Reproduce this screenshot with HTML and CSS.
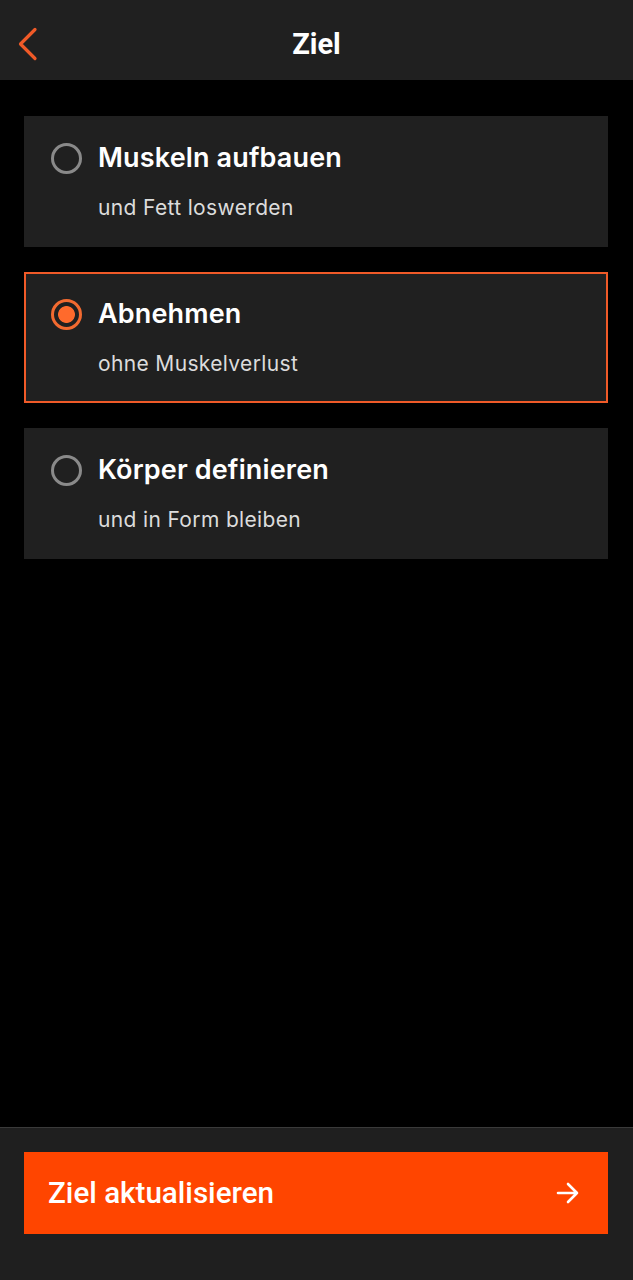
FILE: index.html
```html
<!DOCTYPE html>
<html lang="de">
<head>
<meta charset="utf-8">
<link rel="stylesheet" href="styles.css">
</head>
<body>
<div class="app">
  <header class="topbar">
    <svg class="back" width="26" height="36" viewBox="0 0 26 36"><path d="M20 3.5 L5.5 18 L20 32.5" fill="none" stroke="#f05a28" stroke-width="3.2" stroke-linecap="round" stroke-linejoin="round"/></svg>
    <h1 class="title">Ziel</h1>
  </header>
  <main class="list">
    <div class="card">
      <div class="row"><span class="radio"></span><span class="card-title">Muskeln aufbauen</span></div>
      <div class="card-sub">und Fett loswerden</div>
    </div>
    <div class="card selected">
      <div class="row"><span class="radio on"></span><span class="card-title">Abnehmen</span></div>
      <div class="card-sub">ohne Muskelverlust</div>
    </div>
    <div class="card">
      <div class="row"><span class="radio"></span><span class="card-title">Körper definieren</span></div>
      <div class="card-sub">und in Form bleiben</div>
    </div>
  </main>
  <footer class="bottom">
    <button class="cta"><span>Ziel aktualisieren</span>
      <svg width="28" height="28" viewBox="0 0 28 28"><path d="M4 14 H23 M14 5 L23 14 L14 23" fill="none" stroke="#fff" stroke-width="2.6" stroke-linecap="round" stroke-linejoin="round"/></svg>
    </button>
  </footer>
</div>
</body>
</html>
```
FILE: styles.css
```css
* { box-sizing: border-box; }
html, body { margin: 0; padding: 0; background: #000; }
.app { width: 633px; height: 1280px; display: flex; flex-direction: column; font-family: Inter, "Liberation Sans", sans-serif; color: #fff; }
.topbar { height: 80px; background: #202020; display: flex; align-items: center; justify-content: center; position: relative; padding-top: 8px; }
.back { position: absolute; left: 15px; top: 26px; }
.title { margin: 0; font-family: Roboto, sans-serif; font-weight: 700; font-size: 29px; letter-spacing: 0; }
.list { flex: 1; padding: 36px 25px 0 24px; display: flex; flex-direction: column; gap: 25px; }
.card { background: #202020; height: 131px; border: 2px solid transparent; padding: 24px 24px 0 25px; }
.card.selected { border-color: #f05a28; }
.row { display: flex; align-items: center; gap: 16px; height: 32px; }
.radio { width: 31px; height: 31px; border-radius: 50%; border: 3px solid #8a8a8a; flex: none; }
.radio.on { border-color: #f26a30; background: radial-gradient(circle, #ff6a2c 0 8px, transparent 8.8px); }
.card-title { font-size: 27px; font-weight: 600; line-height: 32px; letter-spacing: 0.15px; }
.card-sub { margin: 20px 0 0 47px; font-size: 21px; line-height: 28px; color: #dcdcdc; letter-spacing: 0.35px; }
.bottom { height: 153px; background: #1f1f1f; border-top: 1px solid #3a3a3a; padding: 24px 25px 0 24px; }
.cta { width: 584px; height: 82px; background: #ff4500; border: none; display: flex; align-items: center; justify-content: space-between; padding: 0 26px 0 24px; color: #fff; font-family: Roboto, sans-serif; font-weight: 500; font-size: 29.6px; }
```
